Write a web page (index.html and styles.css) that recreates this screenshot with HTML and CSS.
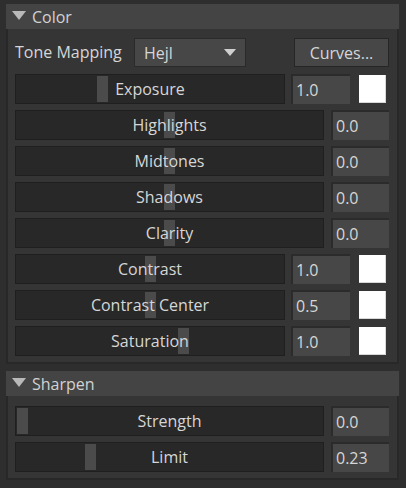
FILE: index.html
```html
<!DOCTYPE html>
<html>
<head>
<meta charset="utf-8">
<link rel="stylesheet" href="styles.css">
</head>
<body>
<div class="panels">
  <section class="section">
    <div class="header">
      <svg class="tri" width="14" height="9" viewBox="0 0 14 9"><polygon points="0,0 14,0 7,9" fill="#b9b9b9"/></svg>
      <span>Color</span>
    </div>
    <div class="body">
      <div class="row tone">
        <span class="label">Tone Mapping</span>
        <div class="combo"><span>Hejl</span><svg width="12" height="7" viewBox="0 0 12 7"><polygon points="0,0 12,0 6,7" fill="#cfcfcf"/></svg></div>
        <div class="button">Curves...</div>
      </div>
      <div class="row swatch-row">
        <div class="slider"><div class="handle" style="left:81px"></div><span class="slider-label">Exposure</span></div>
        <div class="field">1.0</div>
        <div class="swatch"></div>
      </div>
      <div class="row">
        <div class="slider"><div class="handle" style="left:148px"></div><span class="slider-label">Highlights</span></div>
        <div class="field">0.0</div>
      </div>
      <div class="row">
        <div class="slider"><div class="handle" style="left:148px"></div><span class="slider-label">Midtones</span></div>
        <div class="field">0.0</div>
      </div>
      <div class="row">
        <div class="slider"><div class="handle" style="left:148px"></div><span class="slider-label">Shadows</span></div>
        <div class="field">0.0</div>
      </div>
      <div class="row">
        <div class="slider"><div class="handle" style="left:148px"></div><span class="slider-label">Clarity</span></div>
        <div class="field">0.0</div>
      </div>
      <div class="row swatch-row">
        <div class="slider"><div class="handle" style="left:129px"></div><span class="slider-label">Contrast</span></div>
        <div class="field">1.0</div>
        <div class="swatch"></div>
      </div>
      <div class="row swatch-row">
        <div class="slider"><div class="handle" style="left:129px"></div><span class="slider-label">Contrast Center</span></div>
        <div class="field">0.5</div>
        <div class="swatch"></div>
      </div>
      <div class="row swatch-row">
        <div class="slider"><div class="handle" style="left:162px"></div><span class="slider-label">Saturation</span></div>
        <div class="field">1.0</div>
        <div class="swatch"></div>
      </div>
    </div>
  </section>
  <section class="section">
    <div class="header">
      <svg class="tri" width="14" height="9" viewBox="0 0 14 9"><polygon points="0,0 14,0 7,9" fill="#b9b9b9"/></svg>
      <span>Sharpen</span>
    </div>
    <div class="body sharpen">
      <div class="row">
        <div class="slider"><div class="handle" style="left:1px"></div><span class="slider-label">Strength</span></div>
        <div class="field">0.0</div>
      </div>
      <div class="row">
        <div class="slider"><div class="handle" style="left:69px"></div><span class="slider-label">Limit</span></div>
        <div class="field">0.23</div>
      </div>
    </div>
  </section>
</div>
</body>
</html>
```

FILE: styles.css
```css
* { box-sizing: border-box; }

body {
  margin: 0;
  background: #2e2e2e;
  font-family: "Open Sans", "Noto Sans", sans-serif;
  font-size: 16px;
  color: #d6d6d6;
}

.panels {
  display: flex;
  flex-direction: column;
  gap: 7px;
  padding: 4px 7px 0 6px;
}

.header {
  height: 25px;
  background: #444444;
  display: flex;
  align-items: center;
  padding-left: 6px;
  gap: 6px;
  color: #d2d2d2;
}

.tri { display: block; margin-top: -2px; }

.body {
  background: #353535;
  border: 2px solid #282828;
  border-top: 0;
  padding: 9px 8px 6px 7px;
  display: flex;
  flex-direction: column;
  gap: 6px;
}

.body.sharpen { padding-top: 10px; }

.row {
  display: flex;
  align-items: stretch;
  height: 30px;
}

.row.tone {
  height: 29px;
  margin-bottom: 1px;
  align-items: center;
}

.label {
  width: 119px;
  padding-bottom: 1px;
}

.combo {
  width: 112px;
  height: 29px;
  background: #474747;
  border: 1px solid #2a2a2a;
  display: flex;
  align-items: center;
  justify-content: space-between;
  padding: 0 9px 0 9px;
  margin-right: 48px;
}

.button {
  width: 95px;
  height: 29px;
  background: #474747;
  border: 1px solid #262626;
  display: flex;
  align-items: center;
  justify-content: center;
}

.slider {
  flex: 1;
  position: relative;
  background: #282828;
  border: 1px solid #1f1f1f;
  display: flex;
  align-items: center;
  justify-content: center;
}

.handle {
  position: absolute;
  top: 1px;
  bottom: 1px;
  width: 11px;
  background: #4b4b4b;
}

.slider-label { position: relative; }

.field {
  width: 58px;
  margin-left: 7px;
  background: #474747;
  border-left: 2px solid #2b2b2b;
  border-top: 2px solid #2b2b2b;
  padding-left: 3px;
  display: flex;
  align-items: center;
}

.swatch-row .field {
  width: 59px;
  margin-left: 6px;
}

.swatch {
  width: 27px;
  height: 28px;
  margin: 1px 3px 0 9px;
  background: #ffffff;
  border-right: 1px solid #d8d8d8;
  border-bottom: 1px solid #d8d8d8;
}
```
